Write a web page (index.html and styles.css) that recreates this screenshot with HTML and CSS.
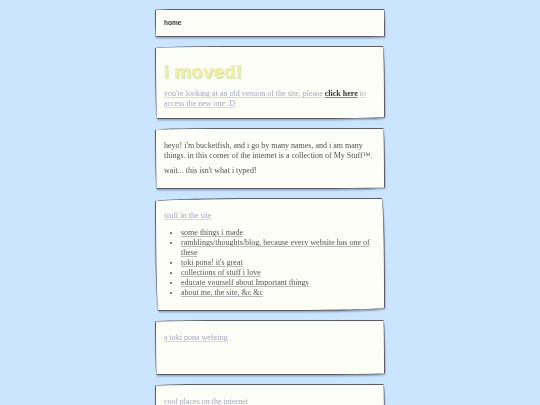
FILE: index.html
```html
<!DOCTYPE html>
<html>
<head>
<meta charset="utf-8">
<link rel="stylesheet" href="styles.css">
</head>
<body>
<div class="wrap">
  <nav class="box nav"><a href="#" class="navlink">home</a></nav>
  <section class="box intro">
    <h1 class="moved">i moved!</h1>
    <p class="txt"><a href="#" class="lnk">you're looking at an old version of the site. please</a> <a href="#" class="strong">click here</a> <a href="#" class="lnk">to access the new one :D</a></p>
  </section>
  <section class="box">
    <p class="txt">heyo! i'm bucketfish, and i go by many names, and i am many things. in this corner of the internet is a collection of My Stuff™.</p>
    <p class="txt">wait... this isn't what i typed!</p>
  </section>
  <section class="box">
    <p class="txt"><a href="#" class="lnk">stuff in the site</a></p>
    <ul class="list">
      <li><a href="#" class="item">some things i made</a></li>
      <li><a href="#" class="item">ramblings/thoughts/blog, because every website has one of these</a></li>
      <li><a href="#" class="item">toki pona! it's great</a></li>
      <li><a href="#" class="item">collections of stuff i love</a></li>
      <li><a href="#" class="item">educate yourself about Important things</a></li>
      <li><a href="#" class="item">about me, the site, &amp;c &amp;c</a></li>
    </ul>
  </section>
  <section class="box">
    <p class="txt"><a href="#" class="lnk">a toki pona webring</a></p>
    <div class="ring"></div>
  </section>
  <section class="box">
    <p class="txt"><a href="#" class="lnk">cool places on the internet</a></p>
    <div class="ring"></div>
  </section>
</div>
</body>
</html>
```

FILE: styles.css
```css
html, body {
  margin: 0;
  padding: 0;
  background: #cce5ff;
}
body {
  font-family: "Liberation Serif", "Times New Roman", serif;
  font-size: 8px;
  color: #505050;
}
.wrap {
  width: 230px;
  margin: 9px auto 0;
  display: flex;
  flex-direction: column;
  gap: 9px;
  will-change: transform;
}
.box {
  background: #fdfdf8;
  border: 1.4px solid #585d68;
  border-radius: 255px 8px 225px 8px / 8px 225px 8px 255px;
  box-shadow: 0.5px 1.5px 1.5px rgba(40, 50, 70, 0.35);
  padding: 8px 8px;
}
.intro {
  padding-bottom: 4px;
}
.nav {
  line-height: 9.5px;
}
.navlink {
  font-family: "Liberation Sans", Arial, sans-serif;
  font-weight: bold;
  font-size: 6.5px;
  color: #333;
  text-decoration: none;
}
.moved {
  font-family: "Liberation Sans", Arial, sans-serif;
  font-size: 19px;
  font-weight: bold;
  line-height: 22px;
  margin: 6px 0 6px;
  color: #f1eeac;
  text-shadow: 0.6px 0.6px 0 #c6e2a4, -0.4px -0.4px 0 #dcebb4;
}
.txt {
  margin: 4px 0;
  line-height: 10.5px;
}
.lnk {
  color: #a3a8bc;
  text-decoration: underline;
  text-decoration-color: #c4dcf5;
}
.strong {
  color: #333;
  font-weight: bold;
  text-decoration: underline;
  text-decoration-color: #888;
}
.list {
  margin: 6.5px 0 4px;
  padding-left: 17px;
  line-height: 10px;
}
.item {
  color: #555;
  text-decoration: underline;
  text-decoration-color: #bbb;
}
.ring {
  height: 18px;
}
```
